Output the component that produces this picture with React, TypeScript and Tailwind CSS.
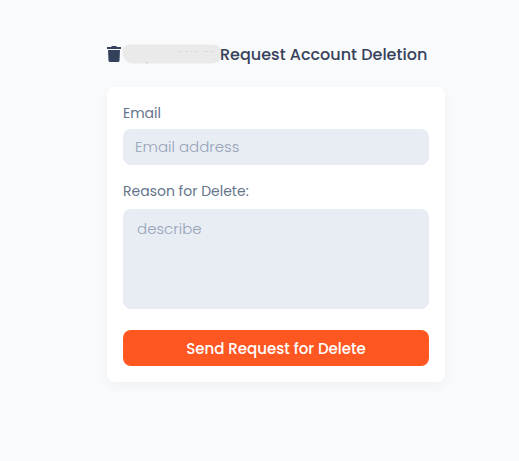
import React from "react";

function TrashIcon() {
  return (
    <svg className="h-4 w-3.5 shrink-0" viewBox="0 0 14 16" fill="#33415c" aria-hidden="true">
      <path d="M0 1H4.200L4.800 0H9.200L9.800 1H14V3H0Z" />
      <path d="M1 4H13L12.5 14.5Q12.3 16 10.900 16H3.100Q1.700 16 1.500 14.5Z" />
    </svg>
  );
}

function HiddenName() {
  return (
    <svg className="h-5 w-[100px] shrink-0" viewBox="0 0 100 20" aria-hidden="true">
      <path
        d="M5 1Q9 0 14 0.500L90 0.500Q97 1 99 5Q101 12 97 17Q94 19.500 88 19.500H11Q6 19.500 4 16Q0 13 0.500 8Q1 3 5 1Z"
        fill="#eaeaea"
      />
      <path d="M57 7.500h3M63 7.500h3M68 7.500h2M73 7.500h3M82 7.500h4M89 7.500h3" stroke="#dadada" />
      <path d="M24 19h2" stroke="#cfd1d4" />
    </svg>
  );
}

const fieldClass =
  "block w-full rounded-lg bg-[#e8edf4] text-[15px] font-light text-[#33415c] outline-none placeholder:text-[#97a3b9]";

export default function App() {
  return (
    <main className="min-h-screen bg-[#f9fafc] pt-11 pr-[74px] pb-16 pl-[107px] font-[Poppins,Inter,sans-serif] text-sm">
      <h1 className="flex h-5 items-center text-base font-medium whitespace-nowrap text-[#36415a]">
        <TrashIcon />
        <span className="ml-px">
          <HiddenName />
        </span>
        <span className="-ml-0.5 pt-0.5">Request Account Deletion</span>
      </h1>
      <form
        className="mt-[23px] rounded-lg bg-white p-4 shadow-[0_4px_12px_rgba(0,0,0,0.04)]"
        onSubmit={(e) => e.preventDefault()}
      >
        <label htmlFor="email" className="mb-1.5 block leading-5 text-[#64748b]">
          Email
        </label>
        <input id="email" type="email" placeholder="Email address" className={`${fieldClass} h-9 px-3 pb-0.5`} />
        <label htmlFor="reason" className="mt-4 mb-2 block leading-5 text-[#64748b]">
          Reason for Delete:
        </label>
        <textarea
          id="reason"
          placeholder="describe"
          className={`${fieldClass} h-[100px] resize-none px-3.5 py-2 leading-6`}
        />
        <button
          type="submit"
          className="mt-[21px] h-9 w-full rounded-lg bg-[#ff5722] pt-0.5 text-[15px] font-medium text-white"
        >
          Send Request for Delete
        </button>
      </form>
    </main>
  );
}
